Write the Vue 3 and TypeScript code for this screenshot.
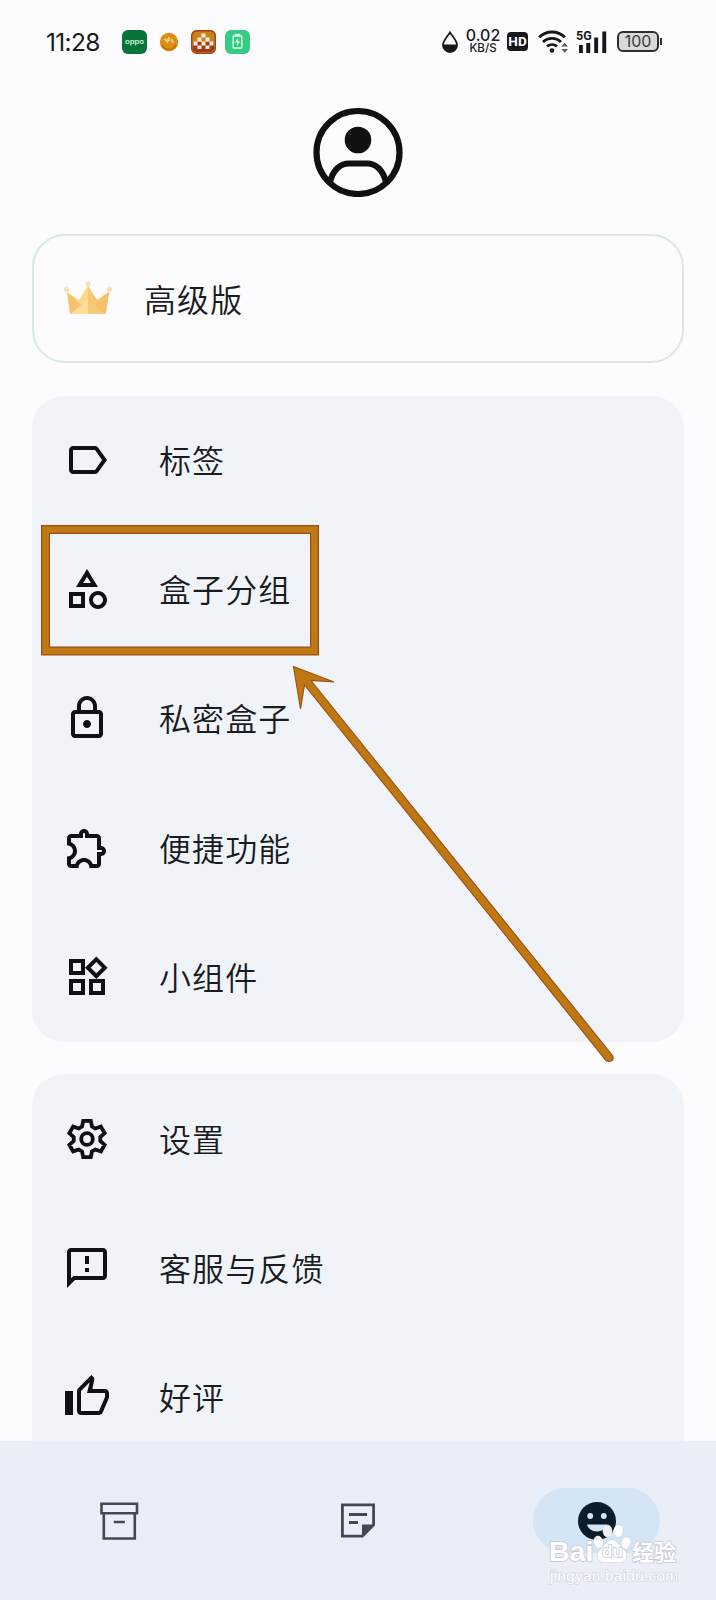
<script setup lang="ts">
interface MenuItem {
  label: string
  path: string
  gear?: boolean
}

const mainItems: MenuItem[] = [
  { label: '标签', path: 'M17.63 5.84C17.27 5.33 16.67 5 16 5L5 5.01C3.9 5.01 3 5.9 3 7v10c0 1.1.9 1.99 2 1.99L16 19c.67 0 1.27-.33 1.63-.84L22 12l-4.37-6.16zM16 17H5V7h11l3.55 5L16 17z' },
  { label: '盒子分组', path: 'M12 2l-5.5 9h11L12 2zm0 3.84L13.93 9h-3.87L12 5.84zM17.5 13c-2.49 0-4.5 2.01-4.5 4.5s2.01 4.5 4.5 4.5 4.5-2.01 4.5-4.5-2.01-4.5-4.5-4.5zm0 7c-1.38 0-2.5-1.12-2.5-2.5s1.12-2.5 2.5-2.5 2.5 1.12 2.5 2.5-1.12 2.5-2.5 2.5zM3 21.5h8v-8H3v8zm2-6h4v4H5v-4z' },
  { label: '私密盒子', path: 'M18 8h-1V6c0-2.76-2.24-5-5-5S7 3.24 7 6v2H6c-1.1 0-2 .9-2 2v10c0 1.1.9 2 2 2h12c1.1 0 2-.9 2-2V10c0-1.1-.9-2-2-2zM9 6c0-1.66 1.34-3 3-3s3 1.34 3 3v2H9V6zm9 14H6V10h12v10zm-6-3c1.1 0 2-.9 2-2s-.9-2-2-2-2 .9-2 2 .9 2 2 2z' },
  { label: '便捷功能', path: 'M10.5 4.5c.28 0 .5.22.5.5v2h6v6h2c.28 0 .5.22.5.5s-.22.5-.5.5h-2v6h-2.12c-.68-1.75-2.39-3-4.38-3s-3.7 1.25-4.38 3H4v-2.12c1.75-.68 3-2.39 3-4.38 0-1.99-1.24-3.7-2.99-4.38L4 7h6V5c0-.28.22-.5.5-.5m0-2C9.12 2.5 8 3.62 8 5H4c-1.1 0-1.99.9-1.99 2v3.8h.29c1.49 0 2.7 1.21 2.7 2.7s-1.21 2.7-2.7 2.7H2V20c0 1.1.9 2 2 2h3.8v-.3c0-1.49 1.21-2.7 2.7-2.7s2.7 1.21 2.7 2.7v.3H17c1.1 0 2-.9 2-2v-4c1.38 0 2.5-1.12 2.5-2.5S20.38 11 19 11V7c0-1.1-.9-2-2-2h-4c0-1.38-1.12-2.5-2.5-2.5z' },
  { label: '小组件', path: 'M16.66 4.52l2.83 2.83-2.83 2.83-2.83-2.83 2.83-2.83M9 5v4H5V5h4m10 10v4h-4v-4h4M9 15v4H5v-4h4m7.66-13.31L11 7.34 16.66 13l5.66-5.66-5.66-5.65zM11 3H3v8h8V3zm10 10h-8v8h8v-8zm-10 0H3v8h8v-8z' },
]

const moreItems: MenuItem[] = [
  { label: '设置', gear: true, path: 'M9.5 5.8L10.1 2.9H13.9L14.5 5.8 16.12 6.73 18.93 5.8 20.83 9.1 18.62 11.07V12.93L20.83 14.9 18.93 18.2 16.12 17.27 14.5 18.2 13.9 21.1H10.1L9.5 18.2 7.88 17.27 5.07 18.2 3.17 14.9 5.38 12.93V11.07L3.17 9.1 5.07 5.8 7.88 6.73Z' },
  { label: '客服与反馈', path: 'M20 2H4c-1.1 0-1.99.9-1.99 2L2 22l4-4h14c1.1 0 2-.9 2-2V4c0-1.1-.9-2-2-2zm0 14H5.17l-.59.59-.58.58V4h16v12zm-9-4h2v2h-2zm0-6h2v4h-2z' },
  { label: '好评', path: 'M9 21h9c.83 0 1.54-.5 1.84-1.22l3.02-7.05c.09-.23.14-.47.14-.73v-2c0-1.1-.9-2-2-2h-6.31l.95-4.57.03-.32c0-.41-.17-.79-.44-1.06L14.17 1 7.58 7.59C7.22 7.95 7 8.45 7 9v10c0 1.1.9 2 2 2zM9 9l4.34-4.34L12 10h9v2l-3 7H9V9zM1 9h4v12H1z' },
]
</script>

<template>
  <div class="screen">
    <header class="status">
      <span class="time">11:28</span>
      <div class="apps">
        <svg width="25" height="24" viewBox="0 0 25 24">
          <rect width="25" height="24" rx="6" fill="#08743a" />
          <text x="3" y="14" class="oppo" textLength="19" lengthAdjust="spacingAndGlyphs">oppo</text>
        </svg>
        <svg class="coin" width="20" height="20" viewBox="0 0 20 20">
          <circle cx="10" cy="10" r="9.2" fill="#dc8d13" />
          <path d="M3 13a8 8 0 0 0 14 0" stroke="#c67607" stroke-width="2" fill="none" />
          <path d="M5 8c1-2 2.500-1 1.500 1 2 1 2.500-3 3.500-4M8 11l3-5M11.500 8.500c1.500-1.500 2.500-1 1.500.5s1 1.500 2 .5" stroke="#fff0c8" stroke-width="1" fill="none" />
        </svg>
        <svg width="25" height="24" viewBox="0 0 25 24">
          <rect x=".7" y=".7" width="23.600" height="22.600" rx="5" fill="#c7811d" stroke="#a8421b" stroke-width="1.500" />
          <path d="M2 12h21v6a4 4 0 0 1-4 4H6a4 4 0 0 1-4-4z" fill="#a33a1c" />
          <path d="M10.500 3.500h4v4h-4zM6.500 7.500h4v4h-4zM14.500 7.500h4v4h-4zM2.500 11.500h4v4h-4zM10.500 11.500h4v4h-4zM18.500 11.500h4v4h-4zM6.500 15.500h4v3.500h-4zM14.500 15.500h4v3.500h-4z" fill="#fbe9da" />
        </svg>
        <svg width="25" height="24" viewBox="0 0 25 24">
          <rect width="25" height="24" rx="6" fill="#36cb82" />
          <path d="M10.500 6V4.500h4V6M8.200 6h8.600v12H8.200z" fill="none" stroke="#dcfff0" stroke-width="1.400" stroke-linejoin="round" />
          <path d="M13 8l-3 4.500h2.300L12 16l3-4.700h-2.300z" fill="#eafff5" />
        </svg>
      </div>
      <div class="system">
        <svg class="drop" width="18" height="24" viewBox="0 0 18 24">
          <path d="M9 2.500C6.500 6.500 2 10.500 2 15a7 7 0 0 0 14 0C16 10.500 11.500 6.500 9 2.500z" fill="none" stroke="#17181b" stroke-width="1.800" />
          <path d="M2 14.500h14a7 7 0 0 1-14 0z" fill="#17181b" />
        </svg>
        <div class="speed"><span class="rate">0.02</span><span class="unit">KB/S</span></div>
        <span class="hd">HD</span>
        <svg class="wifi" width="32" height="24" viewBox="0 0 32 24">
          <g fill="none" stroke="#17181b" stroke-width="2.900">
            <path d="M1.200 7.300a18 18 0 0 1 25.600 0" />
            <path d="M5 12a13 13 0 0 1 18 0" />
            <path d="M9 16.500a7.600 7.600 0 0 1 10 0" />
          </g>
          <circle cx="14" cy="20.500" r="2.300" fill="#17181b" />
          <path d="M23.500 16.500l3.200-3.700 3.200 3.700zM23.500 19l3.200 3.700 3.200-3.700z" fill="#55565a" />
        </svg>
        <div class="signal">
          <svg width="31" height="24" viewBox="0 0 31 24">
            <path d="M2 15h3.900v8H2zM9.300 13h3.900v10H9.300zM17.200 7.500h3.900v15.500h-3.900zM25.300 1.500h3.900V23h-3.900z" fill="#17181b" />
          </svg>
          <span class="gen">5G</span>
        </div>
        <div class="battery"><span>100</span></div>
      </div>
    </header>

    <div class="profile">
      <svg width="90" height="90" viewBox="0 0 90 90" fill="none" stroke="#101113">
        <circle cx="45" cy="45.500" r="41.500" stroke-width="6.200" />
        <circle cx="45" cy="33" r="13.300" fill="#101113" stroke="none" />
        <path d="M17 75.500C19.500 63.500 27 56.500 36 56.500h18c9 0 16.500 7 19 19" stroke-width="6" />
      </svg>
    </div>

    <section class="premium">
      <svg width="50" height="36" viewBox="0 0 50 36">
        <path d="M4 12l12 8 9-14 9 14 12-8-3 20q-.3 2-2 2H9q-1.700 0-2-2z" fill="#fbd78a" />
        <path d="M4 12l14 13-11 9z" fill="#f5c271" />
        <path d="M25 6l9 14 12-8-3 20q-.3 2-2 2H25z" fill="#f6c873" />
        <path d="M46 12L32 25l9 9q2 0 2-2z" fill="#f5c06a" />
        <path d="M25 18l16 16H25z" fill="#f7ca74" />
        <path d="M25 18L9 34h16z" fill="#fddf9b" />
        <g fill="#f8dfb4"><circle cx="25" cy="4" r="2.600" /><circle cx="3.500" cy="9.500" r="2.600" /><circle cx="46.500" cy="9.500" r="2.600" /></g>
      </svg>
      <span class="label">高级版</span>
    </section>

    <section class="card">
      <div v-for="item in mainItems" :key="item.label" class="row">
        <svg width="48" height="48" viewBox="0 0 24 24"><path :d="item.path" fill="#0e1216" /></svg>
        <span class="label">{{ item.label }}</span>
      </div>
    </section>

    <section class="card more">
      <div v-for="item in moreItems" :key="item.label" class="row">
        <svg v-if="item.gear" width="48" height="48" viewBox="0 0 24 24" fill="none" stroke="#0e1216" stroke-width="1.9">
          <path :d="item.path" />
          <circle cx="12" cy="12" r="2.900" />
        </svg>
        <svg v-else width="48" height="48" viewBox="0 0 24 24"><path :d="item.path" fill="#0e1216" /></svg>
        <span class="label">{{ item.label }}</span>
      </div>
    </section>

    <nav class="tabs">
      <div class="tab">
        <svg width="40" height="40" viewBox="0 0 40 40" fill="none" stroke="#454851" stroke-width="2.600">
          <path d="M2.500 2.800H38v9.500H2.500zM4.800 12.300h31V37.500h-31zM14.800 21h11" />
        </svg>
      </div>
      <div class="tab">
        <svg width="40" height="40" viewBox="0 0 40 40" fill="none" stroke="#454851" stroke-width="2.800">
          <path d="M4.400 3.900h31.200v20L24.400 35.100h-20zM11 13.500h18M11 21.500h9" />
          <path d="M24 23.500h12L24 35.500z" fill="#454851" stroke="none" />
        </svg>
      </div>
      <div class="tab">
        <div class="pill">
          <svg width="40" height="40" viewBox="0 0 40 40">
            <circle cx="20" cy="20" r="19" fill="#0b1c2b" />
            <circle cx="13.200" cy="15" r="2.900" fill="#d5e5f6" /><circle cx="26.800" cy="15" r="2.900" fill="#d5e5f6" />
            <path d="M10 23.500h20c-1 4-5 7-10 7s-9-3-10-7z" fill="#d5e5f6" />
          </svg>
        </div>
      </div>
    </nav>

    <svg class="annotation" width="716" height="1600" viewBox="0 0 716 1600">
      <rect x="45.500" y="529.500" width="269" height="121.500" fill="none" stroke="#a24d13" stroke-width="9" />
      <rect x="45.500" y="529.500" width="269" height="121.500" fill="none" stroke="#be7a14" stroke-width="6.500" />
      <path d="M293.500 666.500L334 682 311 680.500 612.500 1055.500Q614 1058.500 612 1060.500 609 1062.500 606 1060.500L304.500 685 300.500 709z" fill="#bd7813" stroke="#a04d10" stroke-width="1.100" stroke-linejoin="miter" />
    </svg>

    <div class="watermark">
      <div class="brand">
        <span class="bai">Bai</span>
        <span class="paw">
          <svg width="38" height="42" viewBox="0 0 38 42" fill="#fff" fill-opacity=".93" stroke="#c3c8d0" stroke-width=".8">
            <ellipse cx="5.500" cy="19" rx="4.500" ry="6" transform="rotate(-15 5.500 19)" />
            <ellipse cx="14.500" cy="8" rx="4.500" ry="6" />
            <ellipse cx="25.500" cy="8" rx="4.700" ry="6" transform="rotate(8 25.500 8)" />
            <ellipse cx="33" cy="20" rx="4.500" ry="6" transform="rotate(15 33 20)" />
            <path d="M19 17c5 0 7 5 11 9 5 4 4 8 2 11-3 4-8 2-13 2s-10 2-13-2c-2-3-3-7 2-11 4-4 6-9 11-9z" />
          </svg>
          <span class="du">du</span>
        </span>
        <span class="jingyan">经验</span>
      </div>
      <div class="site">jingyan.baidu.com</div>
    </div>
  </div>
</template>

<style>
body { background: #fcfcfe; }
</style>

<style scoped>
.screen {
  position: relative;
  display: flex;
  flex-direction: column;
  width: 716px;
  height: 1600px;
  overflow: hidden;
  background: #fcfcfe;
  color: #191b1f;
  font-family: "Noto Sans CJK SC", sans-serif;
}
svg { display: block; flex: none; }
.status {
  display: flex;
  align-items: center;
  flex: none;
  height: 83px;
  box-sizing: border-box;
  padding: 0 55px 0 46px;
}
.time { width: 76px; font: 400 24.500px/30px Inter, sans-serif; letter-spacing: -.7px; }
.apps { display: flex; align-items: center; gap: 9.800px; }
.oppo { fill: #d6f5df; font: 600 7px Inter, sans-serif; }
.coin { margin: 0 2px; }
.system { display: flex; align-items: center; margin-left: auto; }
.speed { display: flex; flex-direction: column; align-items: center; width: 36px; margin: 0 6px 0 6px; }
.rate { font: 500 16px/13px Inter, sans-serif; }
.unit { font: 500 11.500px/13px Inter, sans-serif; }
.hd { width: 21px; height: 19px; border-radius: 4px; background: #17181b; color: #fff; font: 700 13.500px/19px Roboto, sans-serif; text-align: center; }
.wifi { margin-left: 10px; }
.signal { position: relative; margin-left: 7px; }
.gen { position: absolute; left: -1px; top: 0; font: 700 12.500px/12px Roboto, sans-serif; background: #fcfcfe; }
.battery {
  position: relative;
  width: 42px;
  height: 21px;
  box-sizing: border-box;
  margin: 0 2px 0 9px;
  border: 2px solid #2d2e31;
  border-radius: 6px;
  background: #d9d9db;
  font: 400 16px/17px Inter, sans-serif;
  text-align: center;
  color: #37383c;
}
.battery::after { content: ""; position: absolute; right: -5px; top: 5px; width: 2px; height: 7px; background: #2d2e31; }
.profile { display: flex; justify-content: center; flex: none; height: 127px; padding-top: 24px; }
.premium {
  display: flex;
  align-items: center;
  flex: none;
  box-sizing: border-box;
  height: 129px;
  margin: 0 32px 32.500px;
  padding-left: 29px;
  border: 2px solid #d9e7ed;
  border-radius: 33px;
}
.premium svg { margin-top: -1px; }
.premium .label { margin-left: 31px; padding-bottom: 1px; }
.label { font-size: 32px; line-height: 48px; letter-spacing: 1.100px; font-weight: 350; padding-bottom: 3px; }
.card { flex: none; margin: 0 32px 32px; border-radius: 32px; background: #f0f4f9; }
.more { padding-bottom: 60px; margin-bottom: 0; }
.row { display: flex; align-items: center; height: 129.400px; padding-left: 31px; }
.row svg { margin-top: -1px; }
.row .label { margin-left: 48px; }
.tabs {
  position: absolute;
  left: 0;
  right: 0;
  bottom: 0;
  display: grid;
  grid-template-columns: repeat(3, 1fr);
  height: 159px;
  background: #eaeef6;
}
.tab { display: flex; justify-content: center; align-items: center; }
.pill { display: flex; justify-content: center; align-items: center; width: 127px; height: 65px; border-radius: 33px; background: #d5e5f6; }
.annotation { position: absolute; left: 0; top: 0; }
.watermark {
  position: absolute;
  left: 549px;
  top: 1523px;
  width: 132px;
  color: #fff;
  paint-order: stroke fill;
  -webkit-text-stroke: 1.600px #c6cad2;
}
.brand { display: flex; align-items: flex-end; height: 42px; }
.bai { font: 700 28.500px/27px "Liberation Sans", sans-serif; width: 44px; }
.paw { position: relative; width: 38px; height: 42px; }
.du { position: absolute; left: 9px; top: 20px; font: 700 17px/18px "Liberation Sans", sans-serif; }
.jingyan { margin-left: 1px; font-size: 22px; line-height: 29px; font-weight: 700; }
.site { font: 400 15.500px/20px "Liberation Sans", sans-serif; letter-spacing: .2px; margin: 1px 0 0 1px; -webkit-text-stroke: 1.200px #ced2da; }
</style>
